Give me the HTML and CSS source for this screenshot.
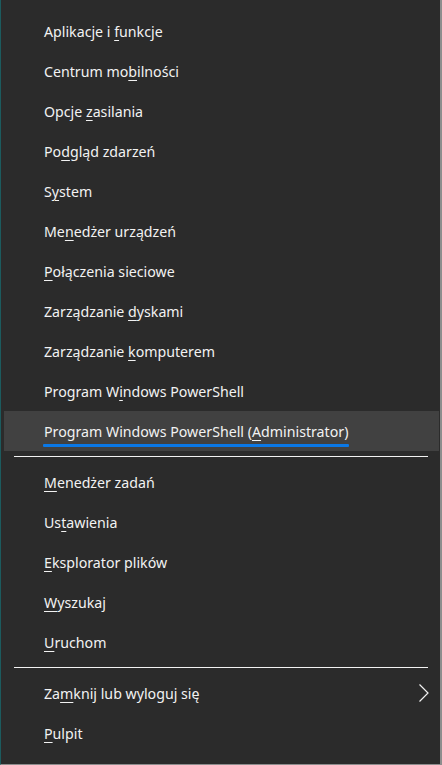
FILE: index.html
```html
<!DOCTYPE html>
<html lang="pl">
<head>
<meta charset="utf-8">
<link rel="stylesheet" href="styles.css">
</head>
<body>
<div class="menu">
  <div class="item"><span>Aplikacje i <u>f</u>unkcje</span></div>
  <div class="item"><span>Centrum mo<u>b</u>ilności</span></div>
  <div class="item"><span>Opcje <u>z</u>asilania</span></div>
  <div class="item"><span>Po<u>d</u>gląd zdarzeń</span></div>
  <div class="item"><span>S<u>y</u>stem</span></div>
  <div class="item"><span>Me<u>n</u>edżer urządzeń</span></div>
  <div class="item"><span><u>P</u>ołączenia sieciowe</span></div>
  <div class="item"><span>Zarządzanie <u>d</u>yskami</span></div>
  <div class="item"><span>Zarządzanie <u>k</u>omputerem</span></div>
  <div class="item"><span>Program W<u>i</u>ndows PowerShell</span></div>
  <div class="item active"><span class="focus">Program Windows PowerShell (<u>A</u>dministrator)</span></div>
  <div class="sep"></div>
  <div class="item"><span><u>M</u>enedżer zadań</span></div>
  <div class="item"><span>Us<u>t</u>awienia</span></div>
  <div class="item"><span><u>E</u>ksplorator plików</span></div>
  <div class="item"><span><u>W</u>yszukaj</span></div>
  <div class="item"><span><u>U</u>ruchom</span></div>
  <div class="sep sep2"></div>
  <div class="item sub"><span>Za<u>m</u>knij lub wyloguj się</span>
    <svg class="chev" width="12" height="20" viewBox="0 0 12 20"><path d="M1.5 1.5 L10 10 L1.5 18.5" fill="none" stroke="#f2f2f2" stroke-width="1.2"/></svg>
  </div>
  <div class="item"><span><u>P</u>ulpit</span></div>
</div>
</body>
</html>
```
FILE: styles.css
```css
html, body {
  margin: 0;
  padding: 0;
  background: #2b2b2b;
}
.menu {
  box-sizing: border-box;
  width: 442px;
  height: 765px;
  background: #2b2b2b;
  border-left: 1px solid #1c5b5e;
  border-right: 2px solid #8d8d8d;
  border-bottom: 1px solid #8d8d8d;
  padding-top: 11px;
  font-family: "Noto Sans", "Open Sans", sans-serif;
  font-size: 14.2px;
  color: #f2f2f2;
}
.item {
  display: flex;
  align-items: center;
  height: 40px;
  margin: 0 1px 0 3px;
  padding-left: 40px;
  white-space: nowrap;
}
.item u {
  text-decoration-thickness: 1px;
  text-underline-offset: 3px;
}
.active {
  background: #414141;
}
.focus {
  position: relative;
}
.focus::after {
  content: "";
  position: absolute;
  left: -1px;
  right: -1px;
  bottom: -6px;
  height: 3px;
  background: #0a78e6;
  border-radius: 1px;
}
.sep {
  height: 1px;
  background: #f2f2f2;
  margin: 5px 12px 5px 13px;
}
.sep2 {
  margin-bottom: 5px;
}
.sub {
  position: relative;
}
.chev {
  position: absolute;
  right: 9px;
  top: 10px;
}
```
